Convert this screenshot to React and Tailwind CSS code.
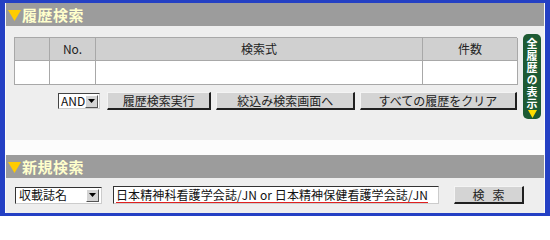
import React from "react";

const font = { fontFamily: '"Noto Sans CJK JP", "Liberation Sans", sans-serif' };

function Btn({ children, className = "" }) {
  return (
    <div
      className={`h-[18px] flex items-center justify-center bg-[#d4d4d4] border-t border-l border-t-[#f4f4f4] border-l-[#f4f4f4] border-r-2 border-b-2 border-r-[#202020] border-b-[#202020] text-[12px] text-[#222] leading-none ${className}`}
    >
      {children}
    </div>
  );
}

function Arrow() {
  return (
    <div className="w-[13px] h-[13px] bg-[#d4d4d4] border border-t-white border-l-white border-r-[#555] border-b-[#555] flex items-center justify-center">
      <svg width="7" height="4" viewBox="0 0 7 4">
        <path d="M0 0H7L3.5 4Z" fill="#000" />
      </svg>
    </div>
  );
}

function Header({ title }) {
  return (
    <div className="h-[23px] bg-[#9c9c9c] flex items-center pl-[2px] mx-[1px]">
      <svg width="13" height="12" viewBox="0 0 13 12" className="mr-[1px]">
        <path d="M0 1H13L6.5 12Z" fill="#ffcc00" />
      </svg>
      <span className="text-[15px] font-bold text-[#ffffcc] leading-none tracking-[0.5px]">{title}</span>
    </div>
  );
}

export default function App() {
  return (
    <div style={font} className="w-[550px] h-[216px] bg-[#2440c4] pl-[5px] pr-[5px] pt-[3px] pb-[3px]">
      <div className="w-full h-full bg-[#fafafa] flex flex-col">
        <Header title="履歴検索" />
        <div className="bg-[#eeeeee] h-[114px] mx-[1px] flex pl-[8px] pt-[11px]">
          <div className="flex flex-col w-[503px]">
            <div className="grid grid-cols-[35px_46px_327px_95px] border-t border-l border-[#a8a8a8]">
              <div className="h-[23px] bg-[#d0d0d0] border-r border-b border-[#a8a8a8]"></div>
              <div className="h-[23px] bg-[#d0d0d0] border-r border-b border-[#a8a8a8] flex items-center justify-center text-[12px] text-[#222]">No.</div>
              <div className="h-[23px] bg-[#d0d0d0] border-r border-b border-[#a8a8a8] flex items-center justify-center text-[12px] text-[#222]">検索式</div>
              <div className="h-[23px] bg-[#d0d0d0] border-r border-b border-[#a8a8a8] flex items-center justify-center text-[12px] text-[#222]">件数</div>
              <div className="h-[24px] bg-white border-r border-b border-[#a8a8a8]"></div>
              <div className="h-[24px] bg-white border-r border-b border-[#a8a8a8]"></div>
              <div className="h-[24px] bg-white border-r border-b border-[#a8a8a8]"></div>
              <div className="h-[24px] bg-white border-r border-b border-[#a8a8a8]"></div>
            </div>
            <div className="flex items-center mt-[7px] pl-[44px]">
              <div className="w-[42px] h-[16px] bg-white border border-[#444] border-r-[#ccc] border-b-[#ccc] flex items-center justify-between pl-[2px] pr-[1px]">
                <span className="text-[12px] leading-none text-[#111]">AND</span>
                <Arrow />
              </div>
              <Btn className="w-[105px] ml-[7px]">履歴検索実行</Btn>
              <Btn className="w-[139px] ml-[5px]">絞込み検索画面へ</Btn>
              <Btn className="w-[158px] ml-[5px]">すべての履歴をクリア</Btn>
            </div>
          </div>
          <div className="ml-[6px] mt-[-3px] w-[18px] h-[85px] rounded-[5px] bg-[#1d5a33] flex flex-col items-center pt-[4px]">
            <span className="[writing-mode:vertical-rl] text-[11px] font-bold text-white leading-[18px] tracking-[1px]">
              全履歴の表示
            </span>
            <svg width="9" height="8" viewBox="0 0 9 8" className="mt-[0px]">
              <path d="M0 0H9L4.5 8Z" fill="#ffdd00" />
            </svg>
          </div>
        </div>
        <div className="h-[15px] bg-[#fcfcfc]"></div>
        <Header title="新規検索" />
        <div className="bg-[#eeeeee] flex-1 mx-[1px] flex items-center pl-[9px] pb-[1px]">
          <div className="w-[87px] h-[17px] bg-white border border-[#333] border-r-[#ccc] border-b-[#ccc] flex items-center justify-between pl-[3px] pr-[2px]">
            <span className="text-[12px] leading-none text-[#111]">収載誌名</span>
            <Arrow />
          </div>
          <div className="ml-[11px] w-[326px] h-[18px] bg-white border border-[#333] border-r-[#ccc] border-b-[#ccc] flex items-center pl-[2px]">
            <span className="text-[12px] leading-[14px] text-[#111] whitespace-nowrap border-b border-[#e02020] tracking-[0.1px]">日本精神科看護学会誌/JN or 日本精神保健看護学会誌/JN</span>
          </div>
          <Btn className="w-[70px] ml-[15px] tracking-[8px] pl-[8px]">検索</Btn>
        </div>
      </div>
    </div>
  );
}
